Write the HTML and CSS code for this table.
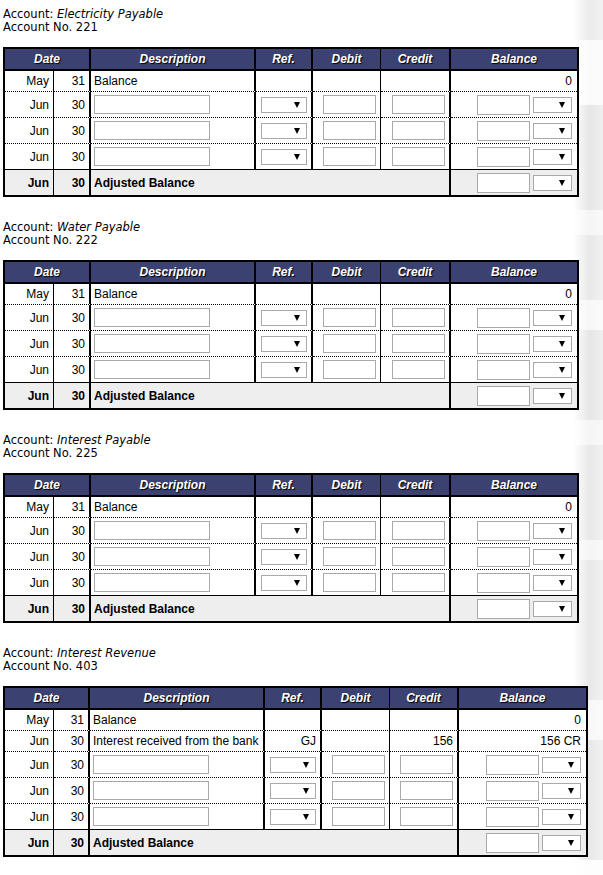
FILE: index.html
```html
<!DOCTYPE html>
<html lang="en">
<head>
<meta charset="utf-8">
<title>Ledger Accounts</title>
<link rel="stylesheet" href="styles.css">
</head>
<body>
<div class="page">

<section class="acct">
  <p class="acct-title">Account: <em>Electricity Payable</em><br>Account No. 221</p>
  <table class="ledger">
    <colgroup><col class="w-mon"><col class="w-day"><col class="w-desc"><col class="w-ref"><col class="w-deb"><col class="w-cre"><col class="w-bal"></colgroup>
    <thead><tr><th colspan="2" class="br2">Date</th><th class="br2">Description</th><th class="br2">Ref.</th><th class="br1">Debit</th><th class="br2">Credit</th><th>Balance</th></tr></thead>
    <tbody>
      <tr class="tr-text"><td class="br1">May</td><td class="br2">31</td><td class="br2 desc">Balance</td><td class="br2"></td><td class="br1"></td><td class="br2"></td><td class="bal">0</td></tr>
      <tr class="tr-input"><td class="br1">Jun</td><td class="br2">30</td><td class="br2 desc"><input class="in in-desc" type="text"></td><td class="br2"><span class="sel"></span></td><td class="br1"><input class="in" type="text"></td><td class="br2"><input class="in" type="text"></td><td class="bal"><input class="in in-bal" type="text"><span class="sel sel-bal"></span></td></tr>
      <tr class="tr-input"><td class="br1">Jun</td><td class="br2">30</td><td class="br2 desc"><input class="in in-desc" type="text"></td><td class="br2"><span class="sel"></span></td><td class="br1"><input class="in" type="text"></td><td class="br2"><input class="in" type="text"></td><td class="bal"><input class="in in-bal" type="text"><span class="sel sel-bal"></span></td></tr>
      <tr class="tr-input tr-last"><td class="br1">Jun</td><td class="br2">30</td><td class="br2 desc"><input class="in in-desc" type="text"></td><td class="br2"><span class="sel"></span></td><td class="br1"><input class="in" type="text"></td><td class="br2"><input class="in" type="text"></td><td class="bal"><input class="in in-bal" type="text"><span class="sel sel-bal"></span></td></tr>
      <tr class="tr-adj"><td class="br1">Jun</td><td class="br2">30</td><td colspan="4" class="br2 desc">Adjusted Balance</td><td class="bal"><input class="in in-bal" type="text"><span class="sel sel-bal"></span></td></tr>
    </tbody>
  </table>
</section>

<section class="acct">
  <p class="acct-title">Account: <em>Water Payable</em><br>Account No. 222</p>
  <table class="ledger">
    <colgroup><col class="w-mon"><col class="w-day"><col class="w-desc"><col class="w-ref"><col class="w-deb"><col class="w-cre"><col class="w-bal"></colgroup>
    <thead><tr><th colspan="2" class="br2">Date</th><th class="br2">Description</th><th class="br2">Ref.</th><th class="br1">Debit</th><th class="br2">Credit</th><th>Balance</th></tr></thead>
    <tbody>
      <tr class="tr-text"><td class="br1">May</td><td class="br2">31</td><td class="br2 desc">Balance</td><td class="br2"></td><td class="br1"></td><td class="br2"></td><td class="bal">0</td></tr>
      <tr class="tr-input"><td class="br1">Jun</td><td class="br2">30</td><td class="br2 desc"><input class="in in-desc" type="text"></td><td class="br2"><span class="sel"></span></td><td class="br1"><input class="in" type="text"></td><td class="br2"><input class="in" type="text"></td><td class="bal"><input class="in in-bal" type="text"><span class="sel sel-bal"></span></td></tr>
      <tr class="tr-input"><td class="br1">Jun</td><td class="br2">30</td><td class="br2 desc"><input class="in in-desc" type="text"></td><td class="br2"><span class="sel"></span></td><td class="br1"><input class="in" type="text"></td><td class="br2"><input class="in" type="text"></td><td class="bal"><input class="in in-bal" type="text"><span class="sel sel-bal"></span></td></tr>
      <tr class="tr-input tr-last"><td class="br1">Jun</td><td class="br2">30</td><td class="br2 desc"><input class="in in-desc" type="text"></td><td class="br2"><span class="sel"></span></td><td class="br1"><input class="in" type="text"></td><td class="br2"><input class="in" type="text"></td><td class="bal"><input class="in in-bal" type="text"><span class="sel sel-bal"></span></td></tr>
      <tr class="tr-adj"><td class="br1">Jun</td><td class="br2">30</td><td colspan="4" class="br2 desc">Adjusted Balance</td><td class="bal"><input class="in in-bal" type="text"><span class="sel sel-bal"></span></td></tr>
    </tbody>
  </table>
</section>

<section class="acct">
  <p class="acct-title">Account: <em>Interest Payable</em><br>Account No. 225</p>
  <table class="ledger">
    <colgroup><col class="w-mon"><col class="w-day"><col class="w-desc"><col class="w-ref"><col class="w-deb"><col class="w-cre"><col class="w-bal"></colgroup>
    <thead><tr><th colspan="2" class="br2">Date</th><th class="br2">Description</th><th class="br2">Ref.</th><th class="br1">Debit</th><th class="br2">Credit</th><th>Balance</th></tr></thead>
    <tbody>
      <tr class="tr-text"><td class="br1">May</td><td class="br2">31</td><td class="br2 desc">Balance</td><td class="br2"></td><td class="br1"></td><td class="br2"></td><td class="bal">0</td></tr>
      <tr class="tr-input"><td class="br1">Jun</td><td class="br2">30</td><td class="br2 desc"><input class="in in-desc" type="text"></td><td class="br2"><span class="sel"></span></td><td class="br1"><input class="in" type="text"></td><td class="br2"><input class="in" type="text"></td><td class="bal"><input class="in in-bal" type="text"><span class="sel sel-bal"></span></td></tr>
      <tr class="tr-input"><td class="br1">Jun</td><td class="br2">30</td><td class="br2 desc"><input class="in in-desc" type="text"></td><td class="br2"><span class="sel"></span></td><td class="br1"><input class="in" type="text"></td><td class="br2"><input class="in" type="text"></td><td class="bal"><input class="in in-bal" type="text"><span class="sel sel-bal"></span></td></tr>
      <tr class="tr-input tr-last"><td class="br1">Jun</td><td class="br2">30</td><td class="br2 desc"><input class="in in-desc" type="text"></td><td class="br2"><span class="sel"></span></td><td class="br1"><input class="in" type="text"></td><td class="br2"><input class="in" type="text"></td><td class="bal"><input class="in in-bal" type="text"><span class="sel sel-bal"></span></td></tr>
      <tr class="tr-adj"><td class="br1">Jun</td><td class="br2">30</td><td colspan="4" class="br2 desc">Adjusted Balance</td><td class="bal"><input class="in in-bal" type="text"><span class="sel sel-bal"></span></td></tr>
    </tbody>
  </table>
</section>

<section class="acct">
  <p class="acct-title">Account: <em>Interest Revenue</em><br>Account No. 403</p>
  <table class="ledger ledger--wide">
    <colgroup><col class="w-mon"><col class="w-day2"><col class="w-desc2"><col class="w-ref"><col class="w-deb"><col class="w-cre2"><col class="w-bal2"></colgroup>
    <thead><tr><th colspan="2" class="br2">Date</th><th class="br2">Description</th><th class="br2">Ref.</th><th class="br1">Debit</th><th class="br2">Credit</th><th>Balance</th></tr></thead>
    <tbody>
      <tr class="tr-text"><td class="br1">May</td><td class="br2">31</td><td class="br2 desc">Balance</td><td class="br2"></td><td class="br1"></td><td class="br2"></td><td class="bal">0</td></tr>
      <tr class="tr-text"><td class="br1">Jun</td><td class="br2">30</td><td class="br2 desc">Interest received from the bank</td><td class="br2">GJ</td><td class="br1"></td><td class="br2">156</td><td class="bal">156 CR</td></tr>
      <tr class="tr-input"><td class="br1">Jun</td><td class="br2">30</td><td class="br2 desc"><input class="in in-desc" type="text"></td><td class="br2"><span class="sel"></span></td><td class="br1"><input class="in" type="text"></td><td class="br2"><input class="in" type="text"></td><td class="bal"><input class="in in-bal" type="text"><span class="sel sel-bal"></span></td></tr>
      <tr class="tr-input"><td class="br1">Jun</td><td class="br2">30</td><td class="br2 desc"><input class="in in-desc" type="text"></td><td class="br2"><span class="sel"></span></td><td class="br1"><input class="in" type="text"></td><td class="br2"><input class="in" type="text"></td><td class="bal"><input class="in in-bal" type="text"><span class="sel sel-bal"></span></td></tr>
      <tr class="tr-input tr-last"><td class="br1">Jun</td><td class="br2">30</td><td class="br2 desc"><input class="in in-desc" type="text"></td><td class="br2"><span class="sel"></span></td><td class="br1"><input class="in" type="text"></td><td class="br2"><input class="in" type="text"></td><td class="bal"><input class="in in-bal" type="text"><span class="sel sel-bal"></span></td></tr>
      <tr class="tr-adj"><td class="br1">Jun</td><td class="br2">30</td><td colspan="4" class="br2 desc">Adjusted Balance</td><td class="bal"><input class="in in-bal" type="text"><span class="sel sel-bal"></span></td></tr>
    </tbody>
  </table>
</section>

</div>
</body>
</html>
```

FILE: styles.css
```css
html, body {
  margin: 0;
  background: #fff;
}

body {
  font-family: "Liberation Sans", Arial, sans-serif;
  font-size: 12px;
  color: #000;
  min-height: 875px;
  background-color: #fff;
  background-image:
    linear-gradient(to bottom,
      rgba(255,255,255,0.2) 0, rgba(255,255,255,0.2) 40px,
      rgba(255,255,255,0.8) 40px, rgba(255,255,255,0.8) 105px,
      rgba(255,255,255,0) 105px, rgba(255,255,255,0) 210px,
      rgba(255,255,255,0.6) 210px, rgba(255,255,255,0.6) 235px,
      rgba(255,255,255,0.1) 235px, rgba(255,255,255,0.1) 300px,
      rgba(255,255,255,0.7) 300px, rgba(255,255,255,0.7) 330px,
      rgba(255,255,255,0) 330px, rgba(255,255,255,0) 420px,
      rgba(255,255,255,0.6) 420px, rgba(255,255,255,0.6) 445px,
      rgba(255,255,255,0.1) 445px, rgba(255,255,255,0.1) 540px,
      rgba(255,255,255,0.6) 540px, rgba(255,255,255,0.6) 560px,
      rgba(255,255,255,0.1) 560px, rgba(255,255,255,0.1) 700px,
      rgba(255,255,255,0.7) 700px, rgba(255,255,255,0.7) 740px,
      rgba(255,255,255,0.1) 740px, rgba(255,255,255,0.1) 860px,
      rgba(255,255,255,0.9) 860px),
    linear-gradient(to right, rgba(236,236,236,0) 0, #e6e6e6 55%, #efefef 100%);
  background-size: 30px 875px, 30px 875px;
  background-position: right top, right top;
  background-repeat: no-repeat;
}

.page {
  padding: 8px 0 0 3px;
}

.acct {
  margin-bottom: 24px;
}

.acct-title {
  margin: 0 0 13px;
  font-family: "DejaVu Sans", Verdana, sans-serif;
  font-size: 11.5px;
  line-height: 13px;
}

.ledger {
  border-collapse: separate;
  border-spacing: 0;
  border: 2px solid #000;
  table-layout: fixed;
  width: 576px;
  background: #fff;
}

.ledger--wide {
  width: 585px;
}

.w-mon { width: 49px; }
.w-day { width: 37px; }
.w-desc { width: 165px; }
.w-ref { width: 57px; }
.w-deb { width: 68px; }
.w-cre { width: 70px; }
.w-bal { width: 126px; }

.w-day2 { width: 36px; }
.w-desc2 { width: 175px; }
.w-cre2 { width: 69px; }
.w-bal2 { width: 127px; }

.ledger th,
.ledger td {
  box-sizing: border-box;
  white-space: nowrap;
  overflow: hidden;
}

.ledger th {
  background: #3b4171;
  color: #fff;
  font-weight: bold;
  font-style: italic;
  text-align: center;
  height: 22px;
  padding: 0;
  border-bottom: 2px solid #000;
  text-shadow: 1px 1px 1px #000;
}

.ledger td {
  text-align: right;
  vertical-align: middle;
  padding: 0 4px;
  border-bottom: 1px dotted #000;
  line-height: 14px;
}

.br1 { border-right: 1px solid #000; }
.br2 { border-right: 2px solid #000; }

.ledger td.desc {
  text-align: left;
  padding-left: 3px;
}

.ledger td.bal {
  padding-right: 5px;
}

.tr-text td { height: 21px; }
.tr-input td { height: 26px; }
.tr-last td { border-bottom: 1px solid #000; }

.tr-adj td {
  height: 25px;
  border-bottom: 0;
  background: #eeeeee;
  font-weight: bold;
}

.in {
  display: inline-block;
  vertical-align: middle;
  box-sizing: border-box;
  width: 53px;
  height: 19px;
  margin: 0;
  padding: 0 2px;
  border: 1px solid #a9a9a9;
  border-radius: 0;
  background: #fff;
  font: inherit;
  font-weight: normal;
}

.in-desc { width: 116px; }
.in-bal { width: 53px; height: 20px; }

.sel {
  display: inline-flex;
  vertical-align: middle;
  justify-content: flex-end;
  align-items: center;
  box-sizing: border-box;
  width: 46px;
  height: 16px;
  padding-right: 6px;
  border: 1px solid #a9a9a9;
  background: #fff;
}

.sel::after {
  content: "";
  width: 0;
  height: 0;
  border-left: 3px solid transparent;
  border-right: 3px solid transparent;
  border-top: 6px solid #000;
}

.sel-bal {
  width: 39px;
  margin-left: 3px;
}
```
